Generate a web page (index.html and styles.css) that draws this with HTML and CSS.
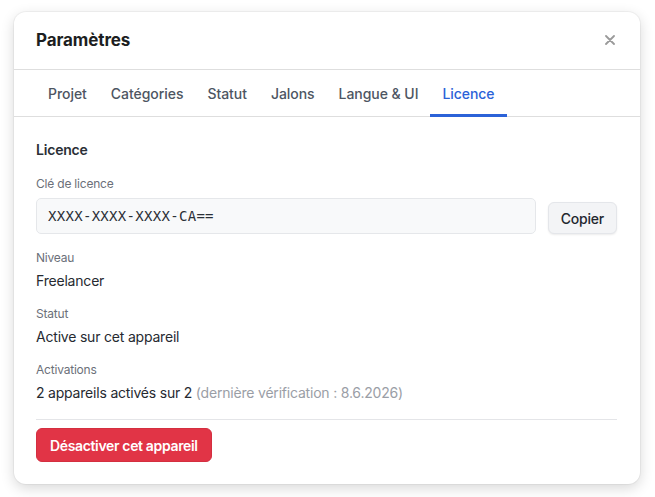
FILE: index.html
```html
<!DOCTYPE html>
<html lang="fr">

<head>
  <meta charset="UTF-8">
  <title>Paramètres</title>
  <link rel="stylesheet" href="styles.css">
</head>

<body>
  <div class="modal">
    <div class="modal-header">
      <h2 class="modal-title">Paramètres</h2>
      <a class="modal-close" title="Fermer">
        <svg width="10" height="10" viewBox="0 0 10 10">
          <path d="M1 1L9 9M9 1L1 9" stroke="#9a9a9a" stroke-width="1.8" stroke-linecap="round" />
        </svg>
      </a>
    </div>
    <ul class="tabs">
      <li class="tab">Projet</li>
      <li class="tab">Catégories</li>
      <li class="tab">Statut</li>
      <li class="tab">Jalons</li>
      <li class="tab">Langue &amp; UI</li>
      <li class="tab tab-active">Licence</li>
    </ul>
    <div class="modal-body">
      <h3 class="section-title">Licence</h3>
      <label class="field-label" for="licence-key">Clé de licence</label>
      <div class="key-row">
        <input type="text" id="licence-key" class="key-input" value="XXXX-XXXX-XXXX-CA==" readonly>
        <button class="btn btn-light">Copier</button>
      </div>
      <div class="field">
        <div class="field-label">Niveau</div>
        <div class="field-value">Freelancer</div>
      </div>
      <div class="field">
        <div class="field-label">Statut</div>
        <div class="field-value">Active sur cet appareil</div>
      </div>
      <div class="field">
        <div class="field-label">Activations</div>
        <div class="field-value">2 appareils activés sur 2 <span class="muted">(dernière vérification : 8.6.2026)</span></div>
      </div>
      <div class="actions">
        <button class="btn btn-danger">Désactiver cet appareil</button>
      </div>
    </div>
  </div>
</body>

</html>
```

FILE: styles.css
```css
html {
  height: 100%;
}

body {
  font-family: Inter, "Noto Sans", "Liberation Sans", sans-serif;
  margin: 0;
  padding: 12px 15px 14px 14px;
  background-color: #fff;
  color: #1f2328;
  letter-spacing: -0.2px;
  box-sizing: border-box;
}

.modal {
  background-color: #fff;
  border-radius: 12px;
  box-shadow: 0 0 0 1px rgba(0, 0, 0, 0.04), 0 4px 14px rgba(0, 0, 0, 0.16);
  overflow: hidden;
}

.modal-header {
  display: flex;
  align-items: center;
  justify-content: space-between;
  height: 58px;
  padding: 0 23px 2px 22px;
  border-bottom: 1px solid #dedede;
  box-sizing: border-box;
}

.modal-title {
  margin: 0;
  font-size: 17px;
  font-weight: 700;
  color: #1c1e21;
  letter-spacing: -0.1px;
}

.modal-close {
  display: flex;
  padding: 2px;
  cursor: pointer;
}

.tabs {
  display: flex;
  list-style-type: none;
  margin: 0;
  padding: 0 0 0 22px;
  border-bottom: 1px solid #dedede;
}

.tab {
  padding: 13px 12px 10px;
  line-height: 21px;
  font-size: 14px;
  font-weight: 500;
  letter-spacing: -0.05px;
  color: #4d5562;
  border-bottom: 3px solid transparent;
  margin-bottom: -1px;
  cursor: pointer;
}

.tab-active {
  color: #2b62d8;
  border-bottom-color: #2b62d8;
}

.modal-body {
  padding: 22px 23px 22px 22px;
}

.section-title {
  margin: 0 0 14px;
  font-size: 14px;
  font-weight: 600;
  line-height: 22px;
  color: #2a2f36;
}

.field-label {
  display: block;
  font-size: 12px;
  line-height: 18px;
  color: #6b7079;
}

.key-row {
  display: flex;
  align-items: flex-end;
  gap: 12px;
  margin-top: 5px;
}

.key-input {
  flex: 1;
  height: 36px;
  padding: 0 11px;
  font-family: "DejaVu Sans Mono", "Liberation Mono", monospace;
  font-size: 14px;
  letter-spacing: 0.3px;
  color: #2a2f36;
  background-color: #f8f9fa;
  border: 1px solid #e5e7ea;
  border-radius: 5px;
  outline: none;
  box-sizing: border-box;
}

.btn {
  font-family: inherit;
  font-size: 14px;
  font-weight: 500;
  letter-spacing: -0.2px;
  border-radius: 6px;
  cursor: pointer;
}

.btn-light {
  height: 32px;
  padding: 0 12px;
  color: #23272e;
  background-color: #f3f4f6;
  border: 1px solid #e4e6ea;
  box-shadow: 0 1px 2px rgba(0, 0, 0, 0.08);
}

.field {
  margin-top: 14px;
}

.key-row + .field {
  margin-top: 15px;
}

.field .field-label {
  margin-bottom: 4px;
}

.field-value {
  font-size: 14px;
  line-height: 20px;
  color: #262a31;
}

.muted {
  color: #9a9ea6;
}

.actions {
  margin-top: 16px;
  padding-top: 8px;
  border-top: 1px solid #e4e5e8;
}

.btn-danger {
  height: 34px;
  padding: 0 13px;
  font-weight: 600;
  letter-spacing: -0.35px;
  color: #fff;
  background-color: #e13446;
  border: 1px solid #d42f40;
}
```
